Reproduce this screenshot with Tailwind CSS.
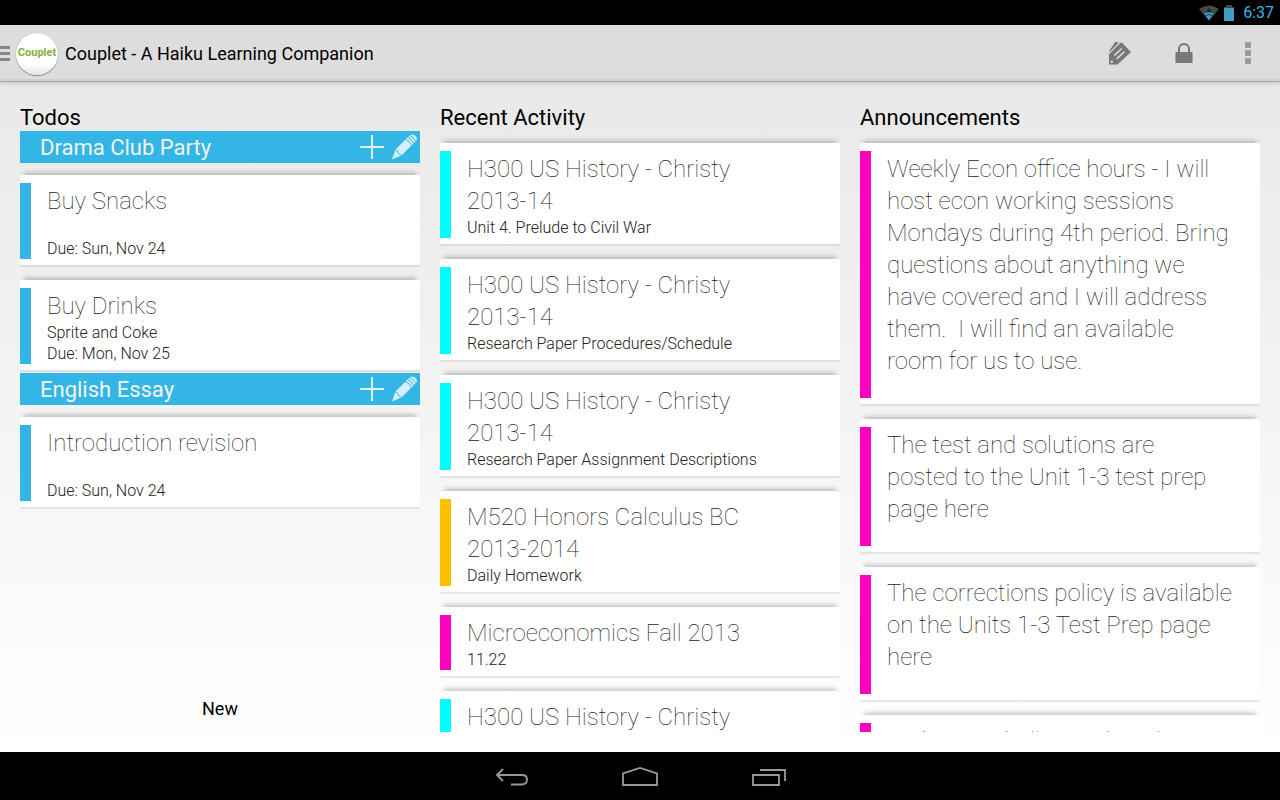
<!DOCTYPE html>
<html lang="en">
<head>
<meta charset="utf-8">
<title>Couplet - A Haiku Learning Companion</title>
<script src="https://cdn.jsdelivr.net/npm/@tailwindcss/browser@4"></script>
</head>
<body class="flex h-screen flex-col overflow-hidden bg-white font-[Roboto,sans-serif] text-black">

<div class="flex h-[25px] shrink-0 items-center justify-end gap-2 bg-black pr-1.5 text-[#33b5e5]">
  <svg class="h-4 w-5" viewBox="0 0 20 16" aria-label="Wi-Fi"><path d="M0 4Q10-3 20 4L10 15.500Z" fill="#484848"/><path d="M10 2.500L13 8H7Z" fill="#202020"/><path d="M5 8.500Q10 6 15 8.500L10 15.500Z" fill="#2f9cc4"/><path d="M6.500 11Q10 8 13.500 11" fill="none" stroke="#123f50" stroke-width="1.200"/></svg>
  <svg class="-ml-1 h-4 w-3" viewBox="0 0 12 16" aria-label="Battery"><path d="M3 0h6v2h2v2H1V2h2z" fill="#484848"/><path d="M1 3h10v13H1z" fill="#3b9fc6"/></svg>
  <time class="text-base leading-5">6:37</time>
</div>

<header class="z-10 flex h-[57px] shrink-0 items-center border-b border-[#a8a8a8] bg-[#dddddd] shadow-[inset_0_-2px_0_#d0d0d0,0_1px_4px_#00000030]">
  <button aria-label="Open menu" class="flex h-10 w-4 flex-col justify-center gap-[3px]">
    <span class="h-[3px] w-2.5 bg-[#85858a]"></span><span class="h-[3px] w-2.5 bg-[#85858a]"></span><span class="h-[3px] w-2.5 bg-[#85858a]"></span>
  </button>
  <div class="mt-0.5 flex size-[42px] items-center justify-center rounded-full bg-linear-to-b from-white from-75% to-[#e4e4e4] pb-0.5 text-[11px] font-bold text-[#84b135] shadow-[0_1px_1px_#888888,0_0_1px_#888888]">Couplet</div>
  <h1 class="ml-[7px] flex-1 pt-0.5 text-lg">Couplet - A Haiku Learning Companion</h1>
  <button aria-label="Tags" class="flex h-14 w-16 items-center justify-center">
    <svg class="size-6" viewBox="0 0 24 24" fill="none"><path d="M1.500 9.500L7.500 .5L11 2L1.500 11.500Z" fill="#777"/><path d="M1 13L12.500 1.700L14 1.700L23 11L9.500 23.500H1Z" fill="#777"/><path d="M1.500 11.500L11 2" stroke="#ddd"/><path d="M6.300 14.500L13.700 7.500M8.700 17.800L16.500 10.500" stroke="#ddd" stroke-width="1.600"/><circle cx="3.800" cy="20.700" r="1.200" fill="#ddd"/></svg>
  </button>
  <button aria-label="Lock" class="flex h-14 w-16 items-center justify-center">
    <svg class="h-5 w-[18px]" viewBox="0 0 18 20"><path d="M4 10V6a5 5 0 0 1 10 0v4" fill="none" stroke="#777" stroke-width="2"/><rect x=".5" y="9" width="17" height="11" rx=".5" fill="#777"/></svg>
  </button>
  <button aria-label="More options" class="flex h-14 w-16 flex-col items-center justify-center gap-0.5">
    <span class="size-1.5 bg-[#999]"></span><span class="size-1.5 bg-[#999]"></span><span class="size-1.5 bg-[#999]"></span>
  </button>
</header>

<main class="grid min-h-0 flex-1 grid-cols-3 gap-5 bg-linear-to-b from-[#e9e9e9] to-white px-5 pt-[21px] pb-5">
  <section class="flex min-h-0 flex-col">
    <h2 class="h-7 text-[22px] leading-[30px]">Todos</h2>
    <div class="flex flex-1 flex-col">
      <div class="flex h-8 items-center bg-[#33b5e5] pl-5 text-[#f3f3f3]">
        <h3 class="flex-1 pt-0.5 text-[22px] leading-8">Drama Club Party</h3>
        <button aria-label="Add todo to Drama Club Party" class="size-8"><svg viewBox="0 0 32 32" fill="none" stroke="#dff3fb" stroke-width="2"><path d="M4 16H28M16 4V28"/></svg></button>
        <button aria-label="Edit Drama Club Party" class="size-8"><svg viewBox="0 0 32 32"><path d="M4 28.500L7.500 18.500L20 6L26 12L13.500 24.500Z" fill="#d6f0fa"/><path d="M19.500 6.500L22.500 4Q25 2.500 27.500 5Q30 7.500 28 10L25.500 12.500Z" fill="#d6f0fa"/><path d="M7 18.500L9.500 20L10.500 22.500L13.500 24.500M17.500 8.500Q22 10 23.500 14.500M19.500 6.500Q24 8 25.500 12.500M21.500 4.500Q26 6 27.500 10.500" fill="none" stroke="#33b5e5"/></svg></button>
      </div>
      <article class="mt-3 mb-[3px] rounded-xs bg-white pt-2 pb-1.5 shadow-[0_2px_0_#00000014,0_-6px_5px_-4px_#00000040]"><div class="border-l-11 border-[#33b5e5] px-4 pt-0.5 text-[#222]"><h4 class="text-2xl leading-8 font-thin">Buy Snacks</h4><p class="mt-[21px] text-base leading-[21px] font-light">Due: Sun, Nov 24</p></div></article>
      <article class="mt-3 mb-[3px] rounded-xs bg-white pt-2 pb-1.5 shadow-[0_2px_0_#00000014,0_-6px_5px_-4px_#00000040]"><div class="border-l-11 border-[#33b5e5] px-4 pt-0.5 text-[#222]"><h4 class="text-2xl leading-8 font-thin">Buy Drinks</h4><p class="text-base leading-[21px] font-light">Sprite and Coke<br>Due: Mon, Nov 25</p></div></article>
      <div class="flex h-8 items-center bg-[#33b5e5] pl-5 text-[#f3f3f3]">
        <h3 class="flex-1 pt-0.5 text-[22px] leading-8">English Essay</h3>
        <button aria-label="Add todo to English Essay" class="size-8"><svg viewBox="0 0 32 32" fill="none" stroke="#dff3fb" stroke-width="2"><path d="M4 16H28M16 4V28"/></svg></button>
        <button aria-label="Edit English Essay" class="size-8"><svg viewBox="0 0 32 32"><path d="M4 28.500L7.500 18.500L20 6L26 12L13.500 24.500Z" fill="#d6f0fa"/><path d="M19.500 6.500L22.500 4Q25 2.500 27.500 5Q30 7.500 28 10L25.500 12.500Z" fill="#d6f0fa"/><path d="M7 18.500L9.500 20L10.500 22.500L13.500 24.500M17.500 8.500Q22 10 23.500 14.500M19.500 6.500Q24 8 25.500 12.500M21.500 4.500Q26 6 27.500 10.500" fill="none" stroke="#33b5e5"/></svg></button>
      </div>
      <article class="mt-3 mb-[3px] rounded-xs bg-white pt-2 pb-1.5 shadow-[0_2px_0_#00000014,0_-6px_5px_-4px_#00000040]"><div class="border-l-11 border-[#33b5e5] px-4 pt-0.5 text-[#222]"><h4 class="text-2xl leading-8 font-thin">Introduction revision</h4><p class="mt-[21px] text-base leading-[21px] font-light">Due: Sun, Nov 24</p></div></article>
    </div>
    <button class="h-12 pt-0.5 text-lg">New</button>
  </section>

  <section class="flex min-h-0 flex-col">
    <h2 class="h-7 shrink-0 text-[22px] leading-[30px]">Recent Activity</h2>
    <div class="min-h-0 flex-1 overflow-hidden">
      <article class="mt-3 mb-[15px] rounded-xs bg-white pt-2 pb-1.5 shadow-[0_2px_0_#00000014,0_-6px_5px_-4px_#00000040]"><div class="border-l-11 border-[#00ffff] px-4 pt-0.5 text-[#222]"><h4 class="text-2xl leading-8 font-thin">H300 US History - Christy<br>2013-14</h4><p class="text-base leading-[21px] font-light">Unit 4. Prelude to Civil War</p></div></article>
      <article class="mb-[15px] rounded-xs bg-white pt-2 pb-1.5 shadow-[0_2px_0_#00000014,0_-6px_5px_-4px_#00000040]"><div class="border-l-11 border-[#00ffff] px-4 pt-0.5 text-[#222]"><h4 class="text-2xl leading-8 font-thin">H300 US History - Christy<br>2013-14</h4><p class="text-base leading-[21px] font-light">Research Paper Procedures/Schedule</p></div></article>
      <article class="mb-[15px] rounded-xs bg-white pt-2 pb-1.5 shadow-[0_2px_0_#00000014,0_-6px_5px_-4px_#00000040]"><div class="border-l-11 border-[#00ffff] px-4 pt-0.5 text-[#222]"><h4 class="text-2xl leading-8 font-thin">H300 US History - Christy<br>2013-14</h4><p class="text-base leading-[21px] font-light">Research Paper Assignment Descriptions</p></div></article>
      <article class="mb-[15px] rounded-xs bg-white pt-2 pb-1.5 shadow-[0_2px_0_#00000014,0_-6px_5px_-4px_#00000040]"><div class="border-l-11 border-[#ffc000] px-4 pt-0.5 text-[#222]"><h4 class="text-2xl leading-8 font-thin">M520 Honors Calculus BC<br>2013-2014</h4><p class="text-base leading-[21px] font-light">Daily Homework</p></div></article>
      <article class="mb-[15px] rounded-xs bg-white pt-2 pb-1.5 shadow-[0_2px_0_#00000014,0_-6px_5px_-4px_#00000040]"><div class="border-l-11 border-[#ff00c0] px-4 pt-0.5 text-[#222]"><h4 class="text-2xl leading-8 font-thin">Microeconomics Fall 2013</h4><p class="text-base leading-[21px] font-light">11.22</p></div></article>
      <article class="rounded-xs bg-white pt-2 pb-1.5 shadow-[0_2px_0_#00000014,0_-6px_5px_-4px_#00000040]"><div class="border-l-11 border-[#00ffff] px-4 pt-0.5 text-[#222]"><h4 class="text-2xl leading-8 font-thin">H300 US History - Christy</h4></div></article>
    </div>
  </section>

  <section class="flex min-h-0 flex-col">
    <h2 class="h-7 shrink-0 text-[22px] leading-[30px]">Announcements</h2>
    <div class="min-h-0 flex-1 overflow-hidden">
      <article class="mt-3 mb-[15px] rounded-xs bg-white pt-2 pb-1.5 shadow-[0_2px_0_#00000014,0_-6px_5px_-4px_#00000040]"><div class="border-l-11 border-[#ff00c0] px-4 pt-0.5 pb-[21px] text-[#222]"><p class="text-2xl leading-8 font-thin">Weekly Econ office hours - I will<br>host econ working sessions<br>Mondays during 4th period. Bring<br>questions about anything we<br>have covered and I will address<br>them.&nbsp; I will find an available<br>room for us to use.</p></div></article>
      <article class="mb-[15px] rounded-xs bg-white pt-2 pb-1.5 shadow-[0_2px_0_#00000014,0_-6px_5px_-4px_#00000040]"><div class="border-l-11 border-[#ff00c0] px-4 pt-0.5 pb-[21px] text-[#222]"><p class="text-2xl leading-8 font-thin">The test and solutions are<br>posted to the Unit 1-3 test prep<br>page here</p></div></article>
      <article class="mb-[15px] rounded-xs bg-white pt-2 pb-1.5 shadow-[0_2px_0_#00000014,0_-6px_5px_-4px_#00000040]"><div class="border-l-11 border-[#ff00c0] px-4 pt-0.5 pb-[21px] text-[#222]"><p class="text-2xl leading-8 font-thin">The corrections policy is available<br>on the Units 1-3 Test Prep page<br>here</p></div></article>
      <article class="rounded-xs bg-white pt-2 pb-1.5 shadow-[0_2px_0_#00000014,0_-6px_5px_-4px_#00000040]"><div class="border-l-11 border-[#ff00c0] px-4 pt-0.5 text-[#222]"><p class="text-2xl leading-8 font-thin">Today we shall complete the</p></div></article>
    </div>
  </section>
</main>

<nav aria-label="System" class="flex h-12 shrink-0 items-center justify-center bg-black pt-0.5">
  <button aria-label="Back" class="flex h-11 w-32 items-center justify-center"><svg class="h-6 w-9" viewBox="0 0 36 24" fill="none" stroke="#999" stroke-width="1.800"><path d="M9 4L3 10L9 16M3 10H28Q33 10 33 14.500T28 19.500H17"/></svg></button>
  <button aria-label="Home" class="flex h-11 w-32 items-center justify-center"><svg class="h-6 w-9" viewBox="0 0 36 24" fill="none" stroke="#999" stroke-width="1.800"><path d="M1 20V8.500L18 3L35 8.500V20Z"/></svg></button>
  <button aria-label="Recent apps" class="flex h-11 w-32 items-center justify-center"><svg class="h-6 w-9" viewBox="0 0 36 24" fill="none" stroke="#999" stroke-width="1.800"><path d="M3 10H29V20H3ZM10 5H35V16"/></svg></button>
</nav>
</body>
</html>
